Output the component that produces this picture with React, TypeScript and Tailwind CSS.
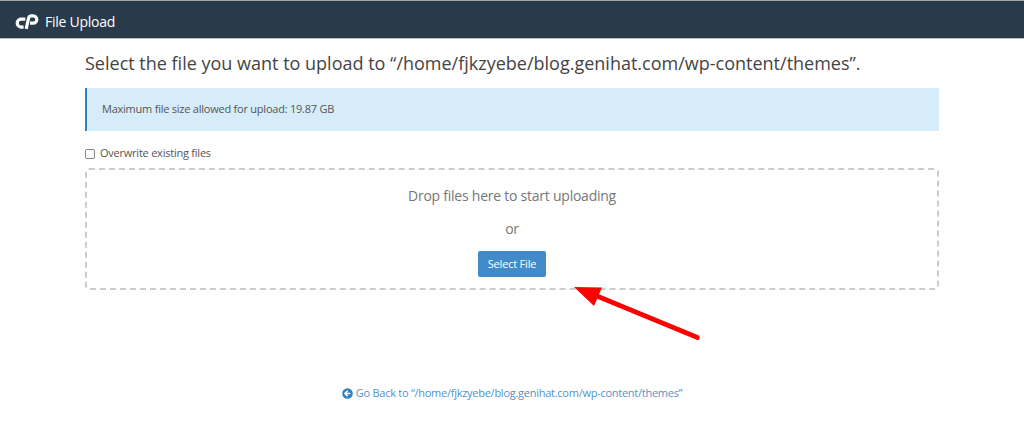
const CpanelLogo = () => (
  <svg width="24" height="17" viewBox="0 0 24 17" fill="none" stroke="white" strokeWidth="3.2">
    <path d="M10.3 6.1H6.4a4 4 0 0 0-.4 8H8.6" />
    <path d="M11.2 15.8L13.6 5.2Q14.2 2.9 16.3 2.9H18.2a3.5 3.5 0 0 1 0 7.2H15" />
  </svg>
);

const ArrowCircle = () => (
  <svg width="11" height="11" viewBox="0 0 11 11">
    <circle cx="5.5" cy="5.5" r="5.3" fill="#3280c0" />
    <path d="M5.7 2.8L3 5.5l2.7 2.7M3.2 5.5h5.2" fill="none" stroke="white" strokeWidth="1.6" />
  </svg>
);

export default function App() {
  return (
    <div className="relative h-[441px] w-[1024px] overflow-hidden bg-white font-['Open_Sans',sans-serif] text-[#444]">
      <header className="flex h-[39px] items-center gap-[6px] border-t border-b border-t-[#a0a4a8] border-b-[#b8bec4] bg-[#293a4a] pt-[4px] pl-[15px] text-white">
        <CpanelLogo />
        <span className="text-[14px] leading-5 tracking-[-0.25px]">File Upload</span>
      </header>

      <main className="mx-[85px] flex flex-col">
        <h1 className="mt-[11px] text-[18px] leading-[26px] whitespace-nowrap">
          Select the file you want to upload to “/home/fjkzyebe/blog.genihat.com/wp-content/themes”.
        </h1>
        <div className="mt-[12px] flex h-[43px] items-center border-l-2 border-[#3280c0] bg-[#d7ecf9] pl-[15px] text-[11px] tracking-[-0.23px] text-[#555]">
          Maximum file size allowed for upload: 19.87 GB
        </div>
        <label className="mt-[14px] flex h-[16px] items-center gap-[5px] text-[11px] tracking-[-0.23px] text-[#555]">
          <input type="checkbox" className="mt-px h-[10px] w-[10px] appearance-none rounded-[2px] border border-[#858585]" />
          Overwrite existing files
        </label>
        <div className="mt-[7px] flex h-[122px] flex-col items-center rounded-[4px] border-2 border-dashed border-[#ccc] pt-[16px] text-[14px] leading-5 tracking-[-0.24px] text-[#777]">
          <p>Drop files here to start uploading</p>
          <p className="mt-[13px]">or</p>
          <button className="mt-[12px] h-[26px] w-[68px] rounded-[2px] bg-[#428bca] text-[11px] tracking-[-0.2px] text-white">Select File</button>
        </div>
        <a className="mt-[95px] flex items-center justify-center gap-[3px] text-[11px] leading-4 tracking-[-0.26px] text-[#5292cb]">
          <ArrowCircle />
          Go Back to “/home/fjkzyebe/blog.genihat.com/wp-content/themes”
        </a>
      </main>

      <svg className="absolute top-[280px] left-[568px]" width="140" height="65" viewBox="0 0 140 65">
        <path d="M24 14L129.500 57.500" stroke="#f00" strokeWidth="4.600" strokeLinecap="round" />
        <path d="M6 7L34 7.500L26 26Z" fill="#f00" />
      </svg>
    </div>
  );
}
